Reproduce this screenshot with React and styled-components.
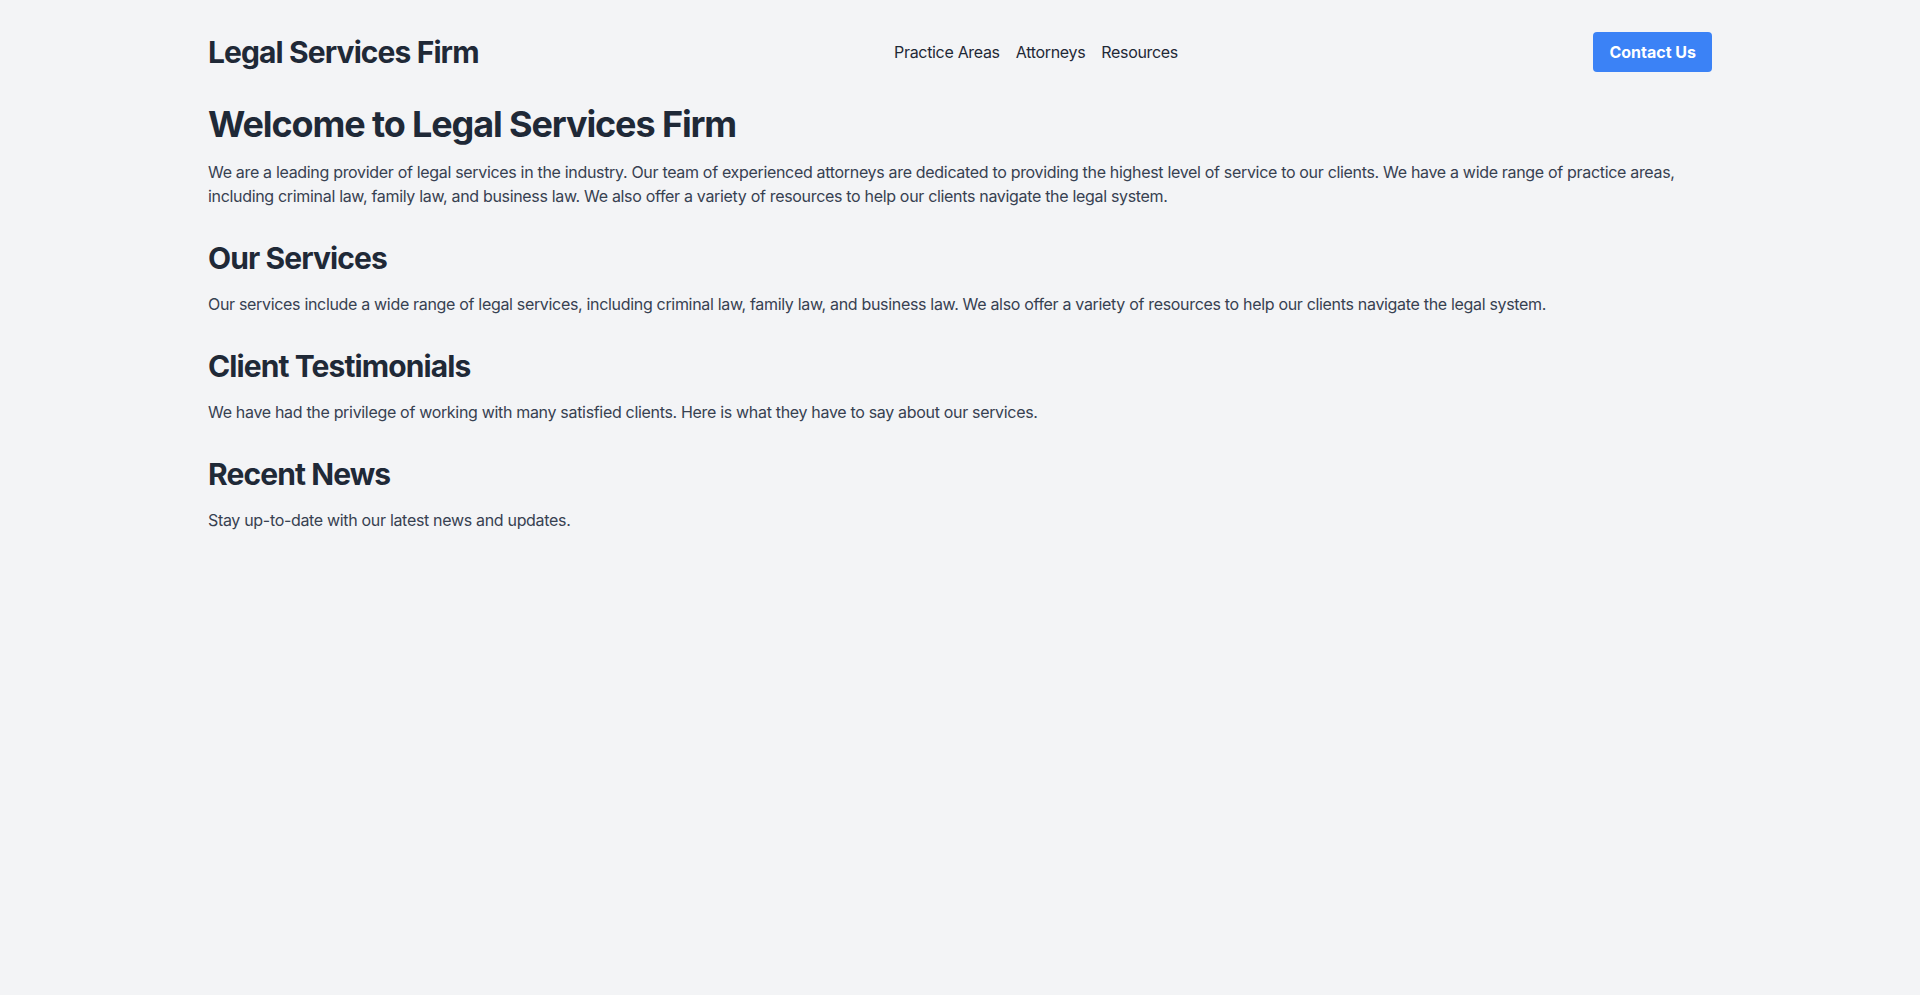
import React from "react";
import styled, { createGlobalStyle } from "styled-components";

const GlobalStyle = createGlobalStyle`
  html, body {
    margin: 0;
    padding: 0;
    background: #f3f4f6;
    font-family: Inter, "Noto Sans", "Liberation Sans", sans-serif;
    color: #1f2937;
  }
  * {
    box-sizing: border-box;
  }
`;

const sections = [
  {
    title: "Our Services",
    text: "Our services include a wide range of legal services, including criminal law, family law, and business law. We also offer a variety of resources to help our clients navigate the legal system.",
  },
  {
    title: "Client Testimonials",
    text: "We have had the privilege of working with many satisfied clients. Here is what they have to say about our services.",
  },
  {
    title: "Recent News",
    text: "Stay up-to-date with our latest news and updates.",
  },
];

export const App = () => {
  return (
    <Page>
      <GlobalStyle />
      <Header>
        <Logo>Legal Services Firm</Logo>
        <Nav>
          <NavLink href="#">Practice Areas</NavLink>
          <NavLink href="#">Attorneys</NavLink>
          <NavLink href="#">Resources</NavLink>
        </Nav>
        <ContactBtn>Contact Us</ContactBtn>
      </Header>
      <Main>
        <Title>Welcome to Legal Services Firm</Title>
        <Text>
          We are a leading provider of legal services in the industry. Our team
          of experienced attorneys are dedicated to providing the highest level
          of service to our clients. We have a wide range of practice areas,
          including criminal law, family law, and business law. We also offer a
          variety of resources to help our clients navigate the legal system.
        </Text>
        {sections.map((s) => (
          <Section key={s.title}>
            <SectionTitle>{s.title}</SectionTitle>
            <Text>{s.text}</Text>
          </Section>
        ))}
      </Main>
    </Page>
  );
};

const Page = styled.div`
  min-height: 100vh;
  background: #f3f4f6;
`;

const Header = styled.header`
  max-width: 1536px;
  margin: 0 auto;
  padding: 32px 16px;
  display: flex;
  justify-content: space-between;
  align-items: center;
`;

const Logo = styled.h1`
  margin: 0;
  font-size: 30px;
  line-height: 36px;
  font-weight: 700;
  letter-spacing: -0.03em;
  color: #1f2937;
`;

const Nav = styled.nav`
  display: flex;
  gap: 16px;
`;

const NavLink = styled.a`
  font-size: 16px;
  line-height: 24px;
  letter-spacing: -0.02em;
  color: #1f2937;
  text-decoration: none;
`;

const ContactBtn = styled.button`
  background-color: #3b82f6;
  color: #fff;
  border: none;
  border-radius: 4px;
  padding: 8px 16px;
  font-family: inherit;
  font-size: 16px;
  line-height: 24px;
  font-weight: 700;
  cursor: pointer;
`;

const Main = styled.main`
  max-width: 1536px;
  margin: 0 auto;
  padding: 0 16px;
`;

const Title = styled.h2`
  margin: 0 0 16px;
  font-size: 36px;
  line-height: 40px;
  font-weight: 700;
  letter-spacing: -0.031em;
  color: #1f2937;
`;

const Section = styled.section`
  margin-top: 32px;
`;

const SectionTitle = styled.h3`
  margin: 0 0 16px;
  font-size: 30px;
  line-height: 36px;
  font-weight: 700;
  letter-spacing: -0.03em;
  color: #1f2937;
`;

const Text = styled.p`
  margin: 0;
  font-size: 16px;
  line-height: 24px;
  letter-spacing: -0.02em;
  color: #374151;
`;

export default App;
